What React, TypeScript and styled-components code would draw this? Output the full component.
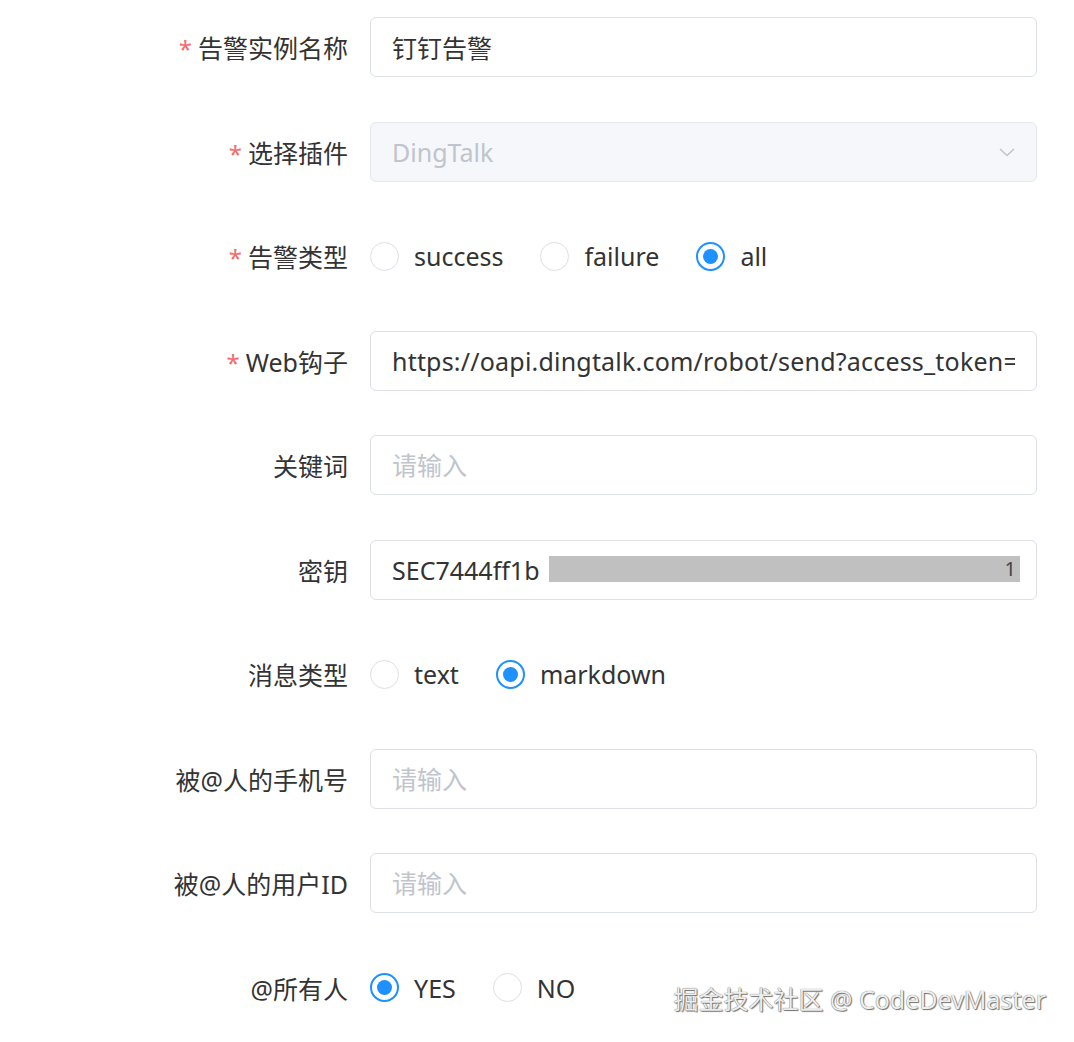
import styled, { createGlobalStyle } from "styled-components";

const GlobalStyle = createGlobalStyle`
  html, body {
    margin: 0;
    padding: 0;
    background: #ffffff;
  }
  body {
    font-family: "Noto Sans", "Noto Sans CJK SC", sans-serif;
    color: #333333;
  }
`;

const Page = styled.div`
  position: relative;
  width: 1074px;
  height: 1042px;
  overflow: hidden;
  background: #fff;
`;

const Form = styled.form`
  display: flex;
  flex-direction: column;
  gap: 44.5px;
  padding-top: 17px;
`;

const Row = styled.div`
  display: flex;
  align-items: center;
  height: 60px;
`;

const Label = styled.label`
  width: 370px;
  padding-right: 22px;
  box-sizing: border-box;
  text-align: right;
  font-size: 25px;
  color: #333;
  white-space: nowrap;
`;

const Star = styled.span`
  color: #f56c6c;
  margin-right: 6px;
  font-size: 24px;
`;

const InputBox = styled.div<{ disabled?: boolean }>`
  position: relative;
  width: 667px;
  height: 60px;
  box-sizing: border-box;
  border: 1px solid ${(p) => (p.disabled ? "#e4e7ed" : "#dcdfe6")};
  border-radius: 6px;
  background: ${(p) => (p.disabled ? "#f5f7fa" : "#fff")};
  display: flex;
  align-items: center;
  padding: 0 21px;
  overflow: hidden;
`;

const Field = styled.input<{ $wide?: boolean }>`
  flex: 1;
  min-width: 0;
  border: none;
  outline: none;
  background: transparent;
  font-family: inherit;
  font-size: 25px;
  letter-spacing: ${(p) => (p.$wide ? "0.2px" : "normal")};
  color: #333;
  padding: 0;
  &::placeholder {
    color: #c0c4cc;
  }
  &:disabled {
    color: #c0c4cc;
  }
`;

const Chevron = styled.svg`
  width: 20px;
  height: 20px;
  margin-left: 8px;
  margin-right: -2px;
`;

const Mask = styled.div`
  position: absolute;
  left: 178px;
  right: 16px;
  top: 15px;
  height: 26px;
  background: #c0c0c0;
  display: flex;
  justify-content: flex-end;
  align-items: center;
  padding-right: 4px;
  font-size: 20px;
  color: #444;
`;

const RadioGroup = styled.div`
  display: flex;
  align-items: center;
  gap: 37px;
`;

const RadioItem = styled.label`
  display: flex;
  align-items: center;
  gap: 15px;
  font-size: 25px;
  color: #333;
`;

const Circle = styled.span<{ checked?: boolean }>`
  width: 29px;
  height: 29px;
  box-sizing: border-box;
  border-radius: 50%;
  border: ${(p) => (p.checked ? "2px solid #1e90ff" : "1.5px solid #dcdfe6")};
  display: flex;
  align-items: center;
  justify-content: center;
  &::after {
    content: "";
    display: ${(p) => (p.checked ? "block" : "none")};
    width: 15px;
    height: 15px;
    border-radius: 50%;
    background: #1e90ff;
  }
`;

const Watermark = styled.div`
  position: absolute;
  right: 28px;
  top: 980px;
  font-size: 25px;
  color: #eeeeee;
  text-shadow: 0 0 1px #444, 1px 1px 1px #777;
  white-space: nowrap;
`;

function Radio({ label, checked }: { label: string; checked?: boolean }) {
  return (
    <RadioItem>
      <Circle checked={checked} />
      {label}
    </RadioItem>
  );
}

function FormLabel({ text, required }: { text: string; required?: boolean }) {
  return (
    <Label>
      {required && <Star>*</Star>}
      {text}
    </Label>
  );
}

export default function App() {
  return (
    <Page>
      <GlobalStyle />
      <Form>
        <Row>
          <FormLabel text="告警实例名称" required />
          <InputBox>
            <Field defaultValue="钉钉告警" />
          </InputBox>
        </Row>
        <Row>
          <FormLabel text="选择插件" required />
          <InputBox disabled>
            <Field disabled defaultValue="DingTalk" />
            <Chevron viewBox="0 0 20 20" fill="none">
              <path d="M3 7l7 6.5L17 7" stroke="#c0c4cc" strokeWidth="1.6" />
            </Chevron>
          </InputBox>
        </Row>
        <Row>
          <FormLabel text="告警类型" required />
          <RadioGroup>
            <Radio label="success" />
            <Radio label="failure" />
            <Radio label="all" checked />
          </RadioGroup>
        </Row>
        <Row>
          <FormLabel text="Web钩子" required />
          <InputBox>
            <Field $wide defaultValue="https://oapi.dingtalk.com/robot/send?access_token=" />
          </InputBox>
        </Row>
        <Row>
          <FormLabel text="关键词" />
          <InputBox>
            <Field placeholder="请输入" />
          </InputBox>
        </Row>
        <Row>
          <FormLabel text="密钥" />
          <InputBox>
            <Field defaultValue="SEC7444ff1b" />
            <Mask>1</Mask>
          </InputBox>
        </Row>
        <Row>
          <FormLabel text="消息类型" />
          <RadioGroup>
            <Radio label="text" />
            <Radio label="markdown" checked />
          </RadioGroup>
        </Row>
        <Row>
          <FormLabel text="被@人的手机号" />
          <InputBox>
            <Field placeholder="请输入" />
          </InputBox>
        </Row>
        <Row>
          <FormLabel text="被@人的用户ID" />
          <InputBox>
            <Field placeholder="请输入" />
          </InputBox>
        </Row>
        <Row>
          <FormLabel text="@所有人" />
          <RadioGroup>
            <Radio label="YES" checked />
            <Radio label="NO" />
          </RadioGroup>
        </Row>
      </Form>
      <Watermark>掘金技术社区 @ CodeDevMaster</Watermark>
    </Page>
  );
}
